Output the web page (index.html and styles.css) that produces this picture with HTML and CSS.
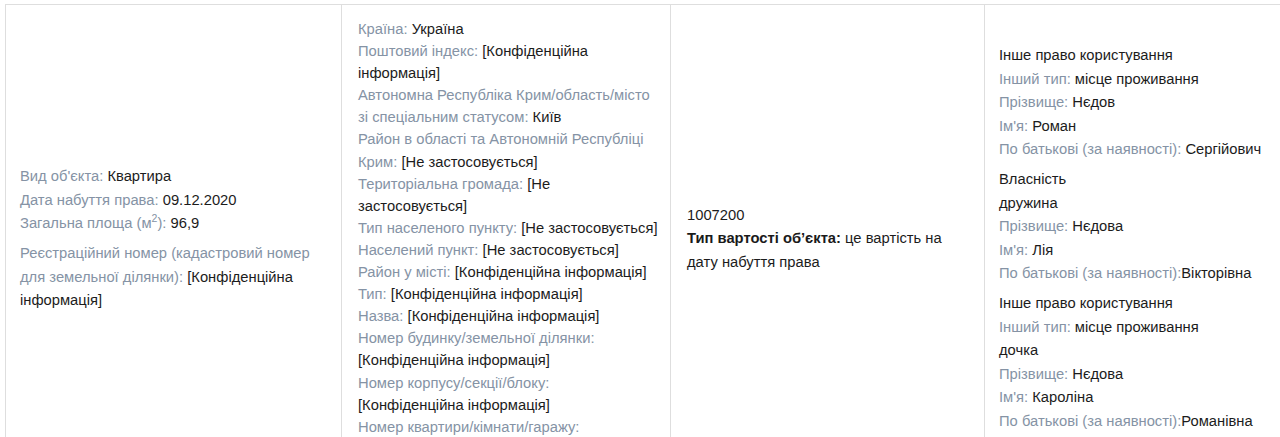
FILE: index.html
```html
<!DOCTYPE html>
<html lang="uk">
<head>
<meta charset="utf-8">
<title>Об'єкт нерухомості</title>
<link rel="stylesheet" href="styles.css">
</head>
<body>
<div class="page">
  <table class="tbl">
    <tr>
      <td class="cell c1">
        <div class="item"><span class="lbl">Вид об'єкта:</span> Квартира</div>
        <div class="item"><span class="lbl">Дата набуття права:</span> 09.12.2020</div>
        <div class="item"><span class="lbl">Загальна площа (м<sup>2</sup>):</span> 96,9</div>
        <div class="item gap"><span class="lbl">Реєстраційний номер (кадастровий номер для земельної ділянки):</span> [Конфіденційна інформація]</div>
      </td>
      <td class="cell c2">
        <div class="addr"><span class="lbl">Країна:</span> Україна</div>
        <div class="addr"><span class="lbl">Поштовий індекс:</span> [Конфіденційна інформація]</div>
        <div class="addr"><span class="lbl">Автономна Республіка Крим/область/місто зі спеціальним статусом:</span> Київ</div>
        <div class="addr"><span class="lbl">Район в області та Автономній Республіці Крим:</span> [Не застосовується]</div>
        <div class="addr"><span class="lbl">Територіальна громада:</span> [Не застосовується]</div>
        <div class="addr"><span class="lbl">Тип населеного пункту:</span> [Не застосовується]</div>
        <div class="addr"><span class="lbl">Населений пункт:</span> [Не застосовується]</div>
        <div class="addr"><span class="lbl">Район у місті:</span> [Конфіденційна інформація]</div>
        <div class="addr"><span class="lbl">Тип:</span> [Конфіденційна інформація]</div>
        <div class="addr"><span class="lbl">Назва:</span> [Конфіденційна інформація]</div>
        <div class="addr"><span class="lbl">Номер будинку/земельної ділянки:</span> [Конфіденційна інформація]</div>
        <div class="addr"><span class="lbl">Номер корпусу/секції/блоку:</span> [Конфіденційна інформація]</div>
        <div class="addr"><span class="lbl">Номер квартири/кімнати/гаражу:</span> [Конфіденційна інформація]</div>
      </td>
      <td class="cell c3">
        <div class="item">1007200</div>
        <div class="item"><b>Тип вартості об’єкта:</b> це вартість на дату набуття права</div>
      </td>
      <td class="cell c4">
        <div class="group">
          <div class="item">Інше право користування</div>
          <div class="item"><span class="lbl">Інший тип:</span> місце проживання</div>
          <div class="item"><span class="lbl">Прізвище:</span> Нєдов</div>
          <div class="item"><span class="lbl">Ім'я:</span> Роман</div>
          <div class="item"><span class="lbl">По батькові (за наявності):</span> Сергійович</div>
        </div>
        <div class="group">
          <div class="item">Власність</div>
          <div class="item">дружина</div>
          <div class="item"><span class="lbl">Прізвище:</span> Нєдова</div>
          <div class="item"><span class="lbl">Ім'я:</span> Лія</div>
          <div class="item"><span class="lbl">По батькові (за наявності):</span>Вікторівна</div>
        </div>
        <div class="group">
          <div class="item">Інше право користування</div>
          <div class="item"><span class="lbl">Інший тип:</span> місце проживання</div>
          <div class="item">дочка</div>
          <div class="item"><span class="lbl">Прізвище:</span> Нєдова</div>
          <div class="item"><span class="lbl">Ім'я:</span> Кароліна</div>
          <div class="item"><span class="lbl">По батькові (за наявності):</span>Романівна</div>
        </div>
      </td>
    </tr>
  </table>
</div>
</body>
</html>
```

FILE: styles.css
```css
html, body {
  margin: 0;
  padding: 0;
  background: #ffffff;
  overflow: hidden;
}

body {
  font-family: "Liberation Sans", Arial, sans-serif;
  font-size: 14.75px;
  color: #1c1c1c;
}

.page {
  padding: 4px 0 0 5px;
  width: 1340px;
}

.tbl {
  border-collapse: collapse;
  table-layout: fixed;
  width: 1330px;
}

.cell {
  border: 1px solid #dedede;
  vertical-align: middle;
  padding: 13px 14px 10px 14px;
}

.c1 { width: 307px; }
.c2 { width: 300px; padding-left: 16px; padding-right: 12px; }
.c3 { width: 282px; padding-left: 16px; padding-right: 15px; }
.c4 { }

.item {
  line-height: 23.5px;
}

.item.gap {
  margin-top: 6.5px;
}

.addr {
  line-height: 22.1px;
}

.group + .group {
  margin-top: 6.5px;
}

.lbl {
  color: #8593a5;
}

sup {
  font-size: 10.5px;
  line-height: 0;
}

b {
  font-weight: bold;
  color: #1a1a1a;
}
```
